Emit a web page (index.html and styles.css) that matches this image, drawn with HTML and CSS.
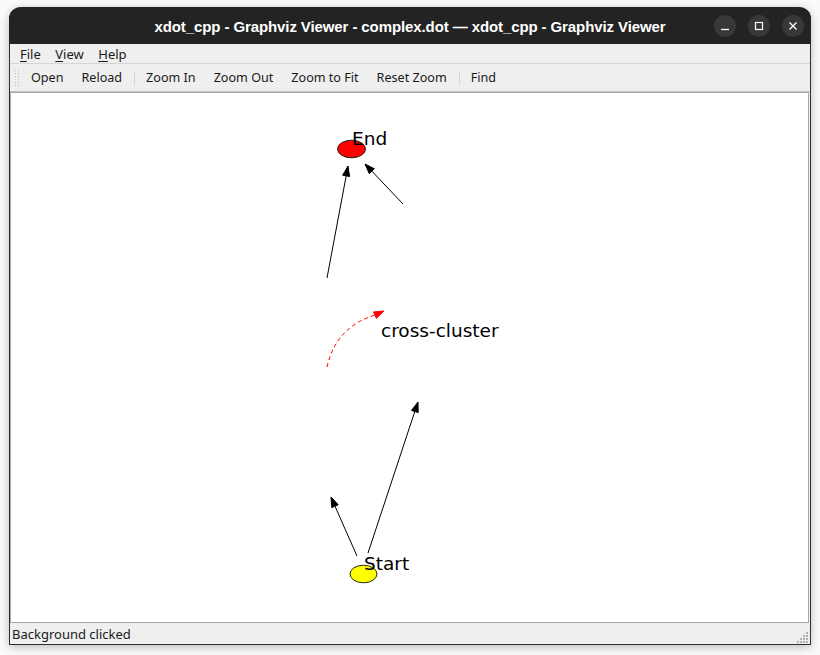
FILE: index.html
```html
<!DOCTYPE html>
<html>
<head>
<meta charset="utf-8">
<title>xdot_cpp</title>
<link rel="stylesheet" href="styles.css">
</head>
<body>
<div class="window">
  <div class="titlebar">
    <div class="title">xdot_cpp - Graphviz Viewer - complex.dot — xdot_cpp - Graphviz Viewer</div>
    <div class="controls">
      <span class="wbtn"><svg width="22" height="22" viewBox="0 0 22 22"><line x1="7" y1="14.5" x2="15" y2="14.5" stroke="#fff" stroke-width="1.3"/></svg></span>
      <span class="wbtn"><svg width="22" height="22" viewBox="0 0 22 22"><rect x="7.5" y="7.5" width="7" height="7" fill="none" stroke="#fff" stroke-width="1.2"/></svg></span>
      <span class="wbtn"><svg width="22" height="22" viewBox="0 0 22 22"><path d="M7.5 7.5 L14.5 14.5 M14.5 7.5 L7.5 14.5" stroke="#fff" stroke-width="1.3"/></svg></span>
    </div>
  </div>
  <div class="menubar">
    <span class="menu"><u>F</u>ile</span>
    <span class="menu"><u>V</u>iew</span>
    <span class="menu"><u>H</u>elp</span>
  </div>
  <div class="toolbar">
    <span class="grip"><svg width="4" height="16" viewBox="0 0 4 16"><g fill="#b8b8b8"><rect x="0" y="0" width="1" height="1"/><rect x="0" y="3" width="1" height="1"/><rect x="0" y="6" width="1" height="1"/><rect x="0" y="9" width="1" height="1"/><rect x="0" y="12" width="1" height="1"/><rect x="0" y="15" width="1" height="1"/><rect x="3" y="0" width="1" height="1"/><rect x="3" y="3" width="1" height="1"/><rect x="3" y="6" width="1" height="1"/><rect x="3" y="9" width="1" height="1"/><rect x="3" y="12" width="1" height="1"/><rect x="3" y="15" width="1" height="1"/></g></svg></span>
    <span class="tool">Open</span>
    <span class="tool">Reload</span>
    <span class="sep"></span>
    <span class="tool">Zoom In</span>
    <span class="tool">Zoom Out</span>
    <span class="tool">Zoom to Fit</span>
    <span class="tool">Reset Zoom</span>
    <span class="sep"></span>
    <span class="tool">Find</span>
  </div>
  <div class="canvas">
    <svg class="graph" width="797" height="529" viewBox="11 93 797 529">
      <g stroke="#000" stroke-width="1" fill="none">
        <line x1="327" y1="278" x2="346.2" y2="175.8"/>
        <line x1="403" y1="204" x2="371.9" y2="171.2"/>
        <line x1="368" y1="553" x2="414.8" y2="411.5"/>
        <line x1="357" y1="556" x2="335" y2="506.2"/>
      </g>
      <g fill="#000" stroke="#000" stroke-width="1">
        <polygon points="348,166 349.6,176.5 342.7,175.2"/>
        <polygon points="365,164 374.4,168.8 369.3,173.7"/>
        <polygon points="418,402 418.2,412.6 411.5,410.4"/>
        <polygon points="331,497 338.2,504.7 331.8,507.6"/>
      </g>
      <path d="M327,367 Q336,327 374.9,315.1" fill="none" stroke="#f00" stroke-width="1" stroke-dasharray="4,3"/>
      <polygon points="384,311 376.3,318.3 373.5,311.9" fill="#f00" stroke="#f00" stroke-width="1"/>
      <ellipse cx="351.5" cy="149" rx="14" ry="8.8" fill="#f00" stroke="#222" stroke-width="1"/>
      <ellipse cx="363.5" cy="574" rx="13.5" ry="8.8" fill="#ff0" stroke="#222" stroke-width="1"/>
      <g class="lbl">
        <text x="352" y="145">End</text>
        <text x="381" y="337">cross-cluster</text>
        <text x="364" y="570">Start</text>
      </g>
    </svg>
  </div>
  <div class="statusbar">
    <span class="status">Background clicked</span>
    <span class="sizegrip"><svg width="12" height="12" viewBox="0 0 12 12"><g fill="#b0b0b0"><rect x="9" y="0" width="2" height="2"/><rect x="6" y="3" width="2" height="2"/><rect x="9" y="3" width="2" height="2"/><rect x="3" y="6" width="2" height="2"/><rect x="6" y="6" width="2" height="2"/><rect x="9" y="6" width="2" height="2"/><rect x="0" y="9" width="2" height="2"/><rect x="3" y="9" width="2" height="2"/><rect x="6" y="9" width="2" height="2"/><rect x="9" y="9" width="2" height="2"/></g></svg></span>
  </div>
</div>
</body>
</html>
```

FILE: styles.css
```css
html, body {
  margin: 0;
  padding: 0;
}
body {
  width: 820px;
  height: 655px;
  background: #fafafa;
  overflow: hidden;
  font-family: "Noto Sans", "DejaVu Sans", sans-serif;
}
.window {
  margin: 7px 0 0 9px;
  width: 800px;
  border: 1px solid #2e2e2e;
  border-top: none;
  border-radius: 12px 12px 0 0;
  background: #efefef;
  box-shadow: 0 2px 10px rgba(0,0,0,0.25);
  display: flex;
  flex-direction: column;
}
.titlebar {
  height: 37px;
  margin: 0 -1px;
  background: #232323;
  border-radius: 12px 12px 0 0;
  position: relative;
  display: flex;
  align-items: center;
  justify-content: center;
}
.title {
  color: #fff;
  font-family: "Liberation Sans", "DejaVu Sans", sans-serif;
  font-weight: bold;
  font-size: 15px;
  letter-spacing: -0.1px;
  padding-top: 1px;
}
.controls {
  position: absolute;
  right: 7px;
  top: 8px;
  display: flex;
  gap: 12px;
}
.wbtn {
  width: 22px;
  height: 22px;
  border-radius: 50%;
  background: #383838;
  display: block;
}
.wbtn svg { display: block; }
.menubar {
  height: 19px;
  border-bottom: 1px solid #d6d6d6;
  display: flex;
  align-items: center;
  padding-left: 10px;
  font-size: 13px;
  color: #1a1a1a;
}
.menu {
  margin-right: 14.5px;
  line-height: 19px;
  padding-top: 1px;
}
.menu u { text-decoration-thickness: 1px; text-underline-offset: 2px; }
.toolbar {
  height: 27px;
  border-bottom: 1px solid #c4c4c4;
  display: flex;
  align-items: center;
  padding-left: 5px;
  font-size: 12.6px;
  color: #1a1a1a;
}
.grip {
  display: block;
  width: 4px;
  height: 16px;
  margin-right: 3px;
}
.grip svg { display: block; }
.tool {
  padding: 1px 9px 0;
  line-height: 26px;
}
.sep {
  width: 1px;
  height: 14px;
  background: #d4d4d4;
  margin: 0 2px 0 3px;
}
.canvas {
  height: 529px;
  margin-right: 1px;
  border: 1px solid #a8a8a8;
  background: #fff;
}
.graph { display: block; }
.lbl text {
  font-family: "DejaVu Sans", sans-serif;
  font-size: 18.5px;
  fill: #000;
}
.statusbar {
  height: 21px;
  display: flex;
  align-items: center;
  justify-content: space-between;
  padding-left: 2px;
  font-size: 13px;
  color: #1a1a1a;
}
.status { line-height: 21px; padding-top: 1px; }
.sizegrip {
  display: block;
  width: 12px;
  height: 12px;
  margin: 8px 1px 0 0;
}
.sizegrip svg { display: block; }
```
